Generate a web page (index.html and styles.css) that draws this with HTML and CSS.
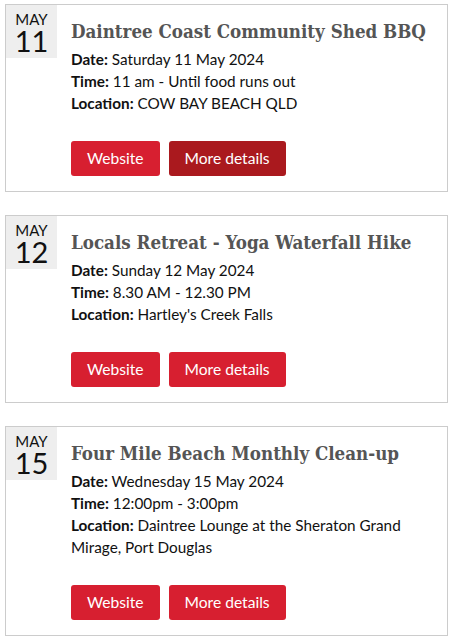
FILE: index.html
```html
<!DOCTYPE html>
<html>
<head>
<meta charset="utf-8">
<link rel="stylesheet" href="styles.css">
</head>
<body>
<div class="list">
  <div class="card">
    <div class="datebox"><span class="mon">MAY</span><span class="day">11</span></div>
    <div class="content">
      <h3 class="title">Daintree Coast Community Shed BBQ</h3>
      <p class="line"><b>Date:</b> Saturday 11 May 2024</p>
      <p class="line"><b>Time:</b> 11 am - Until food runs out</p>
      <p class="line"><b>Location:</b> COW BAY BEACH QLD</p>
      <div class="buttons"><a class="btn">Website</a><a class="btn dark">More details</a></div>
    </div>
  </div>
  <div class="card">
    <div class="datebox"><span class="mon">MAY</span><span class="day">12</span></div>
    <div class="content">
      <h3 class="title">Locals Retreat - Yoga Waterfall Hike</h3>
      <p class="line"><b>Date:</b> Sunday 12 May 2024</p>
      <p class="line"><b>Time:</b> 8.30 AM - 12.30 PM</p>
      <p class="line"><b>Location:</b> Hartley's Creek Falls</p>
      <div class="buttons"><a class="btn">Website</a><a class="btn">More details</a></div>
    </div>
  </div>
  <div class="card">
    <div class="datebox"><span class="mon">MAY</span><span class="day">15</span></div>
    <div class="content">
      <h3 class="title">Four Mile Beach Monthly Clean-up</h3>
      <p class="line"><b>Date:</b> Wednesday 15 May 2024</p>
      <p class="line"><b>Time:</b> 12:00pm - 3:00pm</p>
      <p class="line"><b>Location:</b> Daintree Lounge at the Sheraton Grand Mirage, Port Douglas</p>
      <div class="buttons"><a class="btn">Website</a><a class="btn">More details</a></div>
    </div>
  </div>
</div>
</body>
</html>
```
FILE: styles.css
```css
html, body {
  margin: 0;
  padding: 0;
  background: #fff;
}
body {
  font-family: Lato, "Liberation Sans", sans-serif;
  color: #111;
}
.list {
  display: flex;
  flex-direction: column;
  gap: 23px;
  padding: 4px 4px 0 5px;
}
.card {
  display: flex;
  align-items: flex-start;
  border: 1px solid #ccc;
  padding-bottom: 15px;
}
.datebox {
  width: 51px;
  height: 53px;
  background: #eee;
  display: flex;
  flex-direction: column;
  align-items: center;
  flex-shrink: 0;
}
.mon {
  font-size: 15px;
  line-height: 16px;
  margin-top: 6px;
  color: #111;
}
.day {
  font-size: 29px;
  line-height: 27px;
  color: #111;
}
.content {
  flex: 1;
  padding: 15px 6px 0 14px;
}
.title {
  margin: 0 0 4px 0;
  font-family: "DejaVu Serif Condensed", "DejaVu Serif", serif;
  font-weight: bold;
  font-size: 18.6px;
  line-height: 24px;
  color: #555;
}
.line {
  margin: 0;
  font-size: 15.3px;
  line-height: 22px;
}
.line b {
  font-weight: bold;
}
.buttons {
  display: flex;
  gap: 9px;
  margin-top: 27px;
}
.btn {
  display: block;
  height: 35px;
  line-height: 35px;
  padding: 0 16px;
  border-radius: 3px;
  background: #d71f30;
  color: #fff;
  font-size: 15.6px;
}
.btn.dark {
  background: #aa191e;
}
```
